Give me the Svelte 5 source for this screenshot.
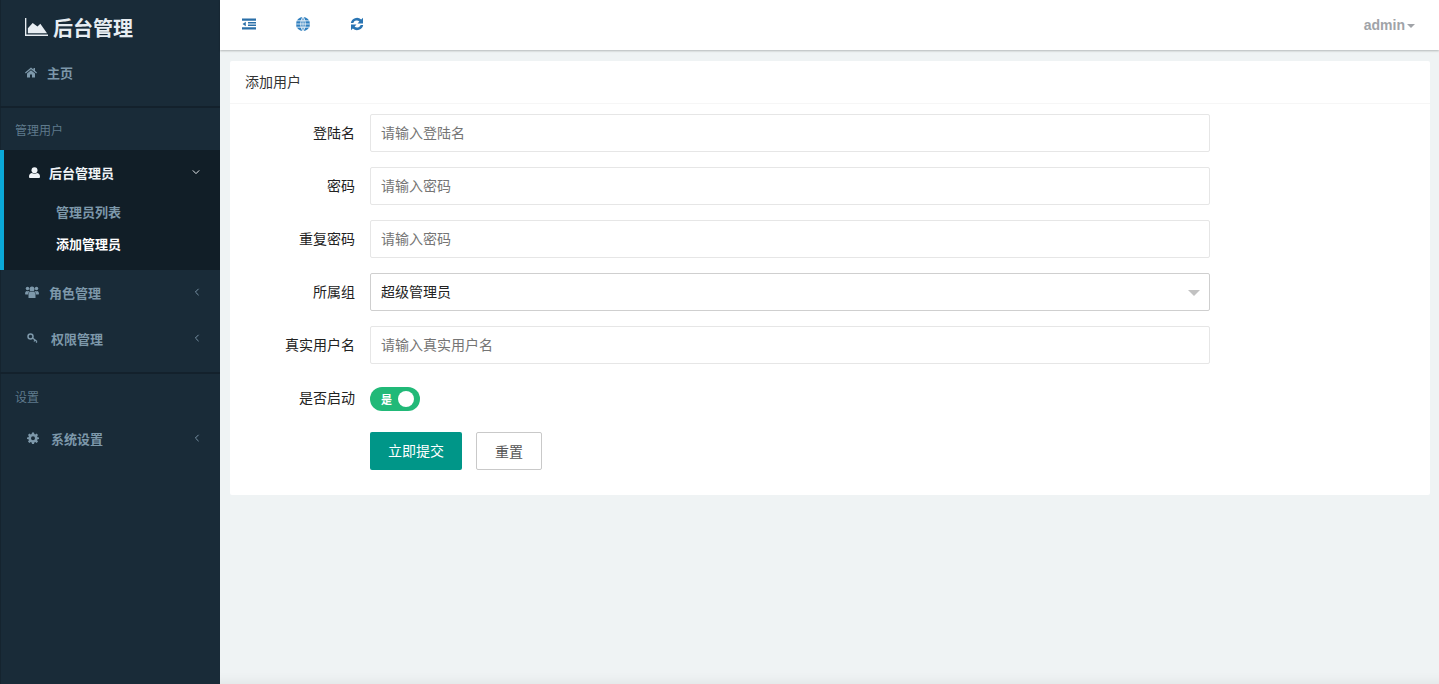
<script>
  const fields = [
    { label: '登陆名', placeholder: '请输入登陆名' },
    { label: '密码', placeholder: '请输入密码' },
    { label: '重复密码', placeholder: '请输入密码' }
  ];
</script>

<div class="layout">
  <aside class="sidebar">
    <div class="logo">
      <svg viewBox="0 0 24 20" width="23" height="18" preserveAspectRatio="none">
        <path d="M0 0h1.400v18.400H24V20H0z" fill="currentColor" />
        <path d="M3 17V11.500l5-6 5 4 3-3 7 10.500z" fill="currentColor" />
      </svg>
      <span>后台管理</span>
    </div>
    <a class="home">
      <svg class="ic" viewBox="0 0 24 24" width="12" height="12"><path d="M12 3 0 13l1.500 2L12 6.500 22.500 15l1.500-2-4-3.300V4h-3v3.200zM4 15v8h6v-6h4v6h6v-8l-8-6.500z" fill="currentColor" /></svg>
      主页
    </a>
    <div class="divider home-divider"></div>
    <div class="group-title first">管理用户</div>
    <div class="open-group">
      <div class="open-head">
        <svg class="ic" viewBox="0 0 24 24" width="11" height="13"><circle cx="12" cy="7" r="6.500" fill="currentColor" /><path d="M2 24q-2 0-2-3 0-7 6-8 6 3 12 0 6 1 6 8 0 3-2 3z" fill="currentColor" /></svg>
        <span>后台管理员</span>
        <svg class="chev" viewBox="0 0 10 10" width="8" height="8"><path d="M1 3l4 4 4-4" fill="none" stroke="currentColor" stroke-width="1.200" /></svg>
      </div>
      <div class="sub">管理员列表</div>
      <div class="sub active">添加管理员</div>
    </div>
    <div class="nav-item">
      <svg class="ic" viewBox="0 0 28 24" width="14" height="12"><circle cx="14" cy="6" r="5" fill="currentColor" /><circle cx="5" cy="5" r="3.500" fill="currentColor" /><circle cx="23" cy="5" r="3.500" fill="currentColor" /><path d="M7 24V16q0-4 4-5 3 2 6 0 4 1 4 5v8zM0 16q0-5 3-6 2 1 5 0l1 1q-3 2-3 6H1zM28 16q0-5-3-6-2 1-5 0l-1 1q3 2 3 6h5z" fill="currentColor" /></svg>
      <span>角色管理</span>
      <svg class="chev" viewBox="0 0 10 10" width="8" height="8"><path d="M7 1L3 5l4 4" fill="none" stroke="currentColor" stroke-width="1.200" /></svg>
    </div>
    <div class="nav-item wide">
      <svg class="ic" viewBox="0 0 24 24" width="12" height="12"><circle cx="7" cy="9" r="5" fill="none" stroke="currentColor" stroke-width="3" /><path d="M11 12l9 7M16 16l-2 3M20 19l-2 2" fill="none" stroke="currentColor" stroke-width="2.500" /></svg>
      <span>权限管理</span>
      <svg class="chev" viewBox="0 0 10 10" width="8" height="8"><path d="M7 1L3 5l4 4" fill="none" stroke="currentColor" stroke-width="1.200" /></svg>
    </div>
    <div class="divider perm-divider"></div>
    <div class="group-title second">设置</div>
    <div class="nav-item wide">
      <svg class="ic" viewBox="0 0 24 24" width="12" height="12"><path fill-rule="evenodd" d="M10 1h4l.7 3.200 1.800.8L19.300 3.200 22 6l-1.800 2.700.8 1.900L24 11v3l-3 .7-.8 1.900L22 19l-2.700 2.800-2.800-1.800-1.800.8L14 24h-4l-.7-3.200-1.800-.8L4.700 21.800 2 19l1.800-2.400-.8-1.900L0 14v-3l3-.4.800-1.900L2 6l2.700-2.800L7.500 5l1.800-.8zM12 8.500a4 4 0 1 0 0 8 4 4 0 0 0 0-8z" fill="currentColor" /></svg>
      <span>系统设置</span>
      <svg class="chev" viewBox="0 0 10 10" width="8" height="8"><path d="M7 1L3 5l4 4" fill="none" stroke="currentColor" stroke-width="1.200" /></svg>
    </div>
  </aside>

  <div class="main">
    <header class="topbar">
      <div class="tools">
        <svg viewBox="0 0 14 12" width="14" height="12"><path d="M0 .5h14v2.200H0zM6 4h8v1.600H6zM6 6.400h8V8H6zM0 9.300h14v2.200H0zM3.800 3.700v4.600L.5 6z" fill="#2a6fa8" /></svg>
        <svg class="globe" viewBox="0 0 14 14" width="14" height="14"><circle cx="7" cy="7" r="7" fill="#2f7fbf" /><path d="M7 0v14M0 7h14M1 3.800h12M1 10.200h12M7 0C4 3 4 11 7 14M7 0c3 3 3 11 0 14" fill="none" stroke="#fff" stroke-width=".8" /></svg>
        <svg class="refresh" viewBox="0 0 14 14" width="14" height="14"><path d="M.8 6A6.200 6.200 0 0 1 11.200 2.600L13 .8V6.400H7.500l1.900-1.900A3.700 3.700 0 0 0 3.300 6zM13.200 8A6.200 6.200 0 0 1 2.800 11.400L1 13.200V7.600h5.500l-1.900 1.900A3.700 3.700 0 0 0 10.700 8z" fill="#2a75b3" /></svg>
      </div>
      <div class="user">admin<span class="caret"></span></div>
    </header>

    <section class="card">
      <div class="card-head">添加用户</div>
      <form class="form">
        {#each fields as f}
          <div class="row">
            <label>{f.label}</label>
            <input placeholder={f.placeholder} />
          </div>
        {/each}
        <div class="row">
          <label>所属组</label>
          <div class="select">超级管理员<span class="select-caret"></span></div>
        </div>
        <div class="row">
          <label>真实用户名</label>
          <input placeholder="请输入真实用户名" />
        </div>
        <div class="row switch-row">
          <label>是否启动</label>
          <div class="switch"><span>是</span><i></i></div>
        </div>
        <div class="row buttons">
          <button type="button" class="primary">立即提交</button>
          <button type="button" class="reset">重置</button>
        </div>
      </form>
    </section>
  </div>
</div>

<style>
  :global(body) {
    margin: 0;
    font-family: "Liberation Sans", "Noto Sans CJK SC", sans-serif;
    overflow: hidden;
  }

  .layout {
    display: flex;
    height: 684px;
  }

  .sidebar {
    width: 220px;
    flex: none;
    background: #192b38;
    box-shadow: inset 1px 0 0 #15242f;
    color: #7d98aa;
    box-sizing: border-box;
    font-size: 13px;
    font-weight: 700;
  }

  .logo {
    display: flex;
    align-items: center;
    gap: 5px;
    height: 56px;
    padding: 0 0 2px 25px;
    box-sizing: border-box;
    color: #e7edf2;
    font-size: 20px;
  }

  .home {
    display: flex;
    align-items: center;
    gap: 10px;
    height: 34px;
    padding: 0 0 2px 25px;
    box-sizing: border-box;
  }

  .divider {
    height: 2px;
    background: #13212c;
  }

  .home-divider {
    margin-top: 16px;
  }

  .group-title {
    font-size: 12px;
    font-weight: 400;
    color: #5f7a8c;
    padding-left: 15px;
    line-height: 18px;
  }

  .group-title.first {
    padding-top: 14px;
    padding-bottom: 10px;
  }

  .group-title.second {
    padding-top: 15px;
    padding-bottom: 9px;
  }

  .open-group {
    background: #111e27;
    border-left: 4px solid #0aa9d8;
    height: 120px;
    box-sizing: border-box;
  }

  .open-head {
    display: flex;
    align-items: center;
    height: 47px;
    padding: 0 20px 3px 25px;
    box-sizing: border-box;
    color: #f0f4f7;
    gap: 9px;
  }

  .open-head span,
  .nav-item span {
    flex: 1;
  }

  .sub {
    height: 32px;
    line-height: 32px;
    padding-left: 52px;
  }

  .sub.active {
    color: #fff;
  }

  .nav-item {
    display: flex;
    align-items: center;
    height: 46px;
    padding: 0 19px 2px 25px;
    box-sizing: border-box;
    gap: 10px;
  }

  .nav-item.wide {
    padding-left: 27px;
    gap: 12px;
  }

  .perm-divider {
    margin-top: 10px;
  }

  .ic,
  .chev {
    flex: none;
  }

  .main {
    flex: 1;
    background: #eff3f4;
    min-width: 0;
    box-shadow: inset 0 -14px 14px -14px rgba(0, 0, 0, 0.08);
  }

  .topbar {
    height: 50px;
    background: #fff;
    box-shadow: 0 1px 2px rgba(0, 0, 0, 0.25);
    display: flex;
    align-items: center;
    justify-content: space-between;
    padding: 0 24px 2px 22px;
    box-sizing: border-box;
  }

  .tools {
    display: flex;
    align-items: center;
    gap: 40px;
  }

  .user {
    display: flex;
    align-items: center;
    color: #a0a3a8;
    font-size: 14px;
    font-weight: 700;
    gap: 2px;
    margin-top: 2px;
  }

  .caret {
    width: 0;
    height: 0;
    border-left: 4px solid transparent;
    border-right: 4px solid transparent;
    border-top: 4px solid #a0a3a8;
    margin-top: 2px;
  }

  .card {
    margin: 11px 9px 0 10px;
    height: 434px;
    background: #fff;
    border-radius: 2px;
  }

  .card-head {
    height: 42px;
    line-height: 42px;
    padding-left: 15px;
    font-size: 14px;
    color: #333;
    border-bottom: 1px solid #f6f6f6;
  }

  .form {
    padding-top: 10px;
  }

  .row {
    display: flex;
    align-items: center;
    height: 38px;
    margin-bottom: 15px;
    font-size: 14px;
  }

  .row label {
    width: 125px;
    padding: 0 15px 2px 0;
    text-align: right;
    color: #222;
    flex: none;
  }

  input,
  .select {
    width: 840px;
    height: 38px;
    box-sizing: border-box;
    border: 1px solid #e6e6e6;
    border-radius: 2px;
    padding: 0 10px;
    font: inherit;
    color: #222;
    outline: none;
  }

  input::placeholder {
    color: #757575;
  }

  .select {
    display: flex;
    align-items: center;
    justify-content: space-between;
    border-color: #cfcfcf;
    padding: 0 9px 2px 10px;
  }

  .select-caret {
    width: 0;
    height: 0;
    border-left: 6px solid transparent;
    border-right: 6px solid transparent;
    border-top: 6px solid #c2c2c2;
    margin-top: 3px;
  }

  .switch-row {
    height: 24px;
    margin-top: 23px;
    margin-bottom: 21px;
  }

  .switch-row label {
    padding-bottom: 4px;
  }

  .switch {
    width: 50px;
    height: 24px;
    border-radius: 12px;
    background: #21b978;
    display: flex;
    align-items: center;
    justify-content: space-between;
    padding: 0 6px 0 11px;
    box-sizing: border-box;
    color: #fff;
    font-size: 11px;
    font-weight: 700;
  }

  .switch i {
    width: 16px;
    height: 16px;
    border-radius: 50%;
    background: #fff;
  }

  .buttons {
    padding-left: 140px;
    gap: 14px;
  }

  button {
    height: 38px;
    font: inherit;
    border-radius: 2px;
    box-sizing: border-box;
    padding: 0 0 2px;
  }

  .primary {
    width: 92px;
    background: #009688;
    border: none;
    color: #fff;
  }

  .reset {
    width: 66px;
    background: #fff;
    border: 1px solid #c9c9c9;
    color: #555;
    padding-bottom: 0;
  }
</style>
